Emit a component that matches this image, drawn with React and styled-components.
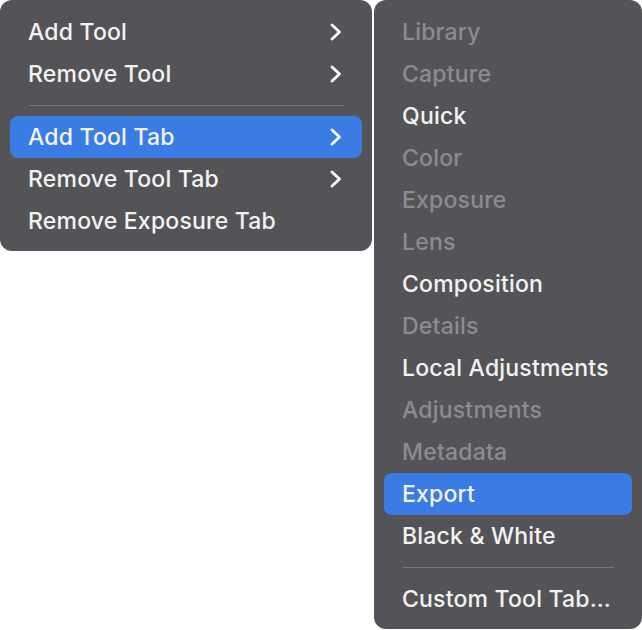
import React from 'react';
import styled, { createGlobalStyle } from 'styled-components';

const GlobalStyle = createGlobalStyle`
  html, body {
    margin: 0;
    padding: 0;
    background: #ffffff;
  }
  body {
    font-family: Inter, "Noto Sans", "Liberation Sans", sans-serif;
    -webkit-font-smoothing: antialiased;
  }
`;

const leftItems = [
  { label: 'Add Tool', sub: true },
  { label: 'Remove Tool', sub: true },
  { separator: true },
  { label: 'Add Tool Tab', sub: true, active: true },
  { label: 'Remove Tool Tab', sub: true },
  { label: 'Remove Exposure Tab' },
];

const rightItems = [
  { label: 'Library', disabled: true },
  { label: 'Capture', disabled: true },
  { label: 'Quick' },
  { label: 'Color', disabled: true },
  { label: 'Exposure', disabled: true },
  { label: 'Lens', disabled: true },
  { label: 'Composition' },
  { label: 'Details', disabled: true },
  { label: 'Local Adjustments' },
  { label: 'Adjustments', disabled: true },
  { label: 'Metadata', disabled: true },
  { label: 'Export', active: true },
  { label: 'Black & White' },
  { separator: true },
  { label: 'Custom Tool Tab…' },
];

const Chevron = () => (
  <svg width="14" height="18" viewBox="0 0 14 18" fill="none">
    <polyline
      points="3,2 10.5,9 3,16"
      stroke="#ffffff"
      strokeWidth="2.8"
      strokeLinecap="round"
      strokeLinejoin="round"
    />
  </svg>
);

const Menu = ({ items, width }) => (
  <Panel $width={width}>
    {items.map((item, i) =>
      item.separator ? (
        <Separator key={i}>
          <span />
        </Separator>
      ) : (
        <Row key={i} $active={item.active} $disabled={item.disabled}>
          <Label>{item.label}</Label>
          {item.sub && <Chevron />}
        </Row>
      )
    )}
  </Panel>
);

const App = () => (
  <>
    <GlobalStyle />
    <Page>
      <Menu items={leftItems} width={372} />
      <Menu items={rightItems} width={268} />
    </Page>
  </>
);

const Page = styled.div`
  display: flex;
  align-items: flex-start;
  gap: 2px;
  width: 642px;
`;

const Panel = styled.div`
  width: ${(p) => p.$width}px;
  box-sizing: border-box;
  padding: 11px 10px 9px;
  background: #545458;
  border-radius: 12px;
  display: flex;
  flex-direction: column;
`;

const Row = styled.div`
  height: 42px;
  box-sizing: border-box;
  display: flex;
  align-items: center;
  justify-content: space-between;
  padding: 0 19px 1px 18px;
  border-radius: 8px;
  background: ${(p) => (p.$active ? '#3b7be4' : 'transparent')};
  color: ${(p) => (p.$disabled ? '#8c8c90' : '#f2f2f2')};

  svg {
    margin-top: 1px;
  }
`;

const Label = styled.span`
  font-size: 23px;
  font-weight: 500;
  letter-spacing: 0.2px;
  white-space: nowrap;
`;

const Separator = styled.div`
  height: 21px;
  display: flex;
  align-items: center;
  padding: 0 18px 0 19px;

  span {
    flex: 1;
    height: 1.5px;
    background: #78787c;
  }
`;

export default App;
